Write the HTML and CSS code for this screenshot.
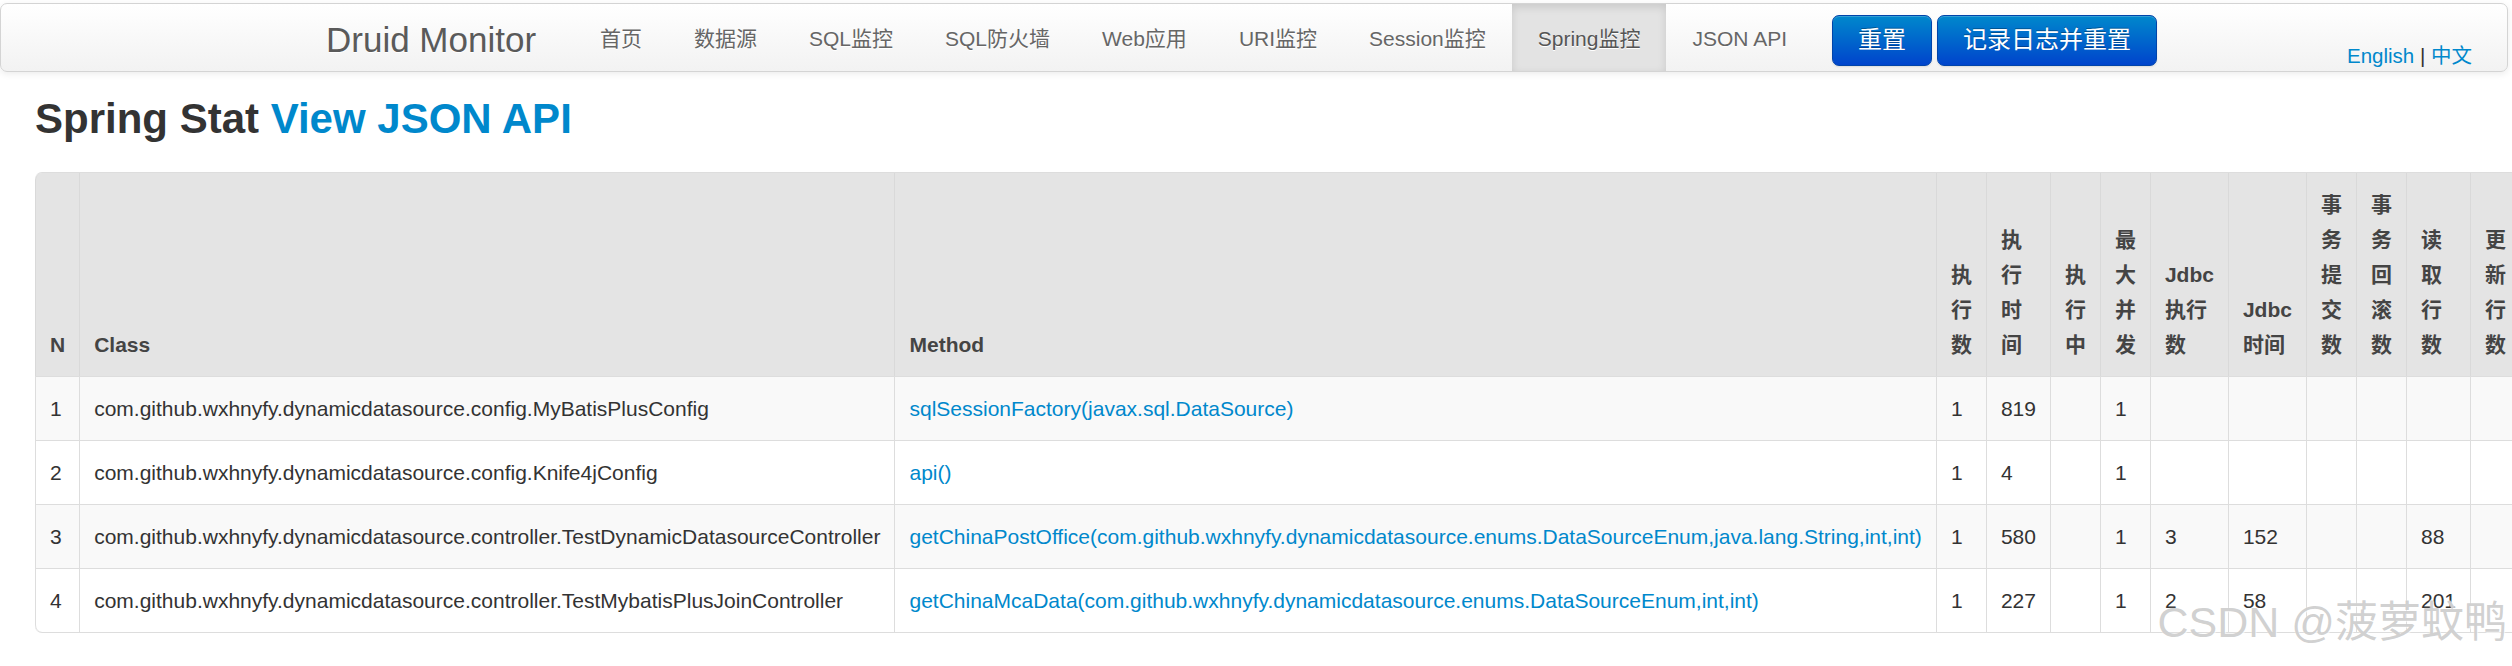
FILE: index.html
```html
<!DOCTYPE html>
<html lang="zh">
<head>
<meta charset="utf-8">
<title>Druid Spring Stat</title>
<link rel="stylesheet" href="styles.css">
</head>
<body>
<div class="page">
  <div class="navbar">
    <div class="navbar-inner">
      <a class="brand" href="#">Druid Monitor</a>
      <ul class="nav">
        <li><a href="#">首页</a></li>
        <li><a href="#">数据源</a></li>
        <li><a href="#">SQL监控</a></li>
        <li><a href="#">SQL防火墙</a></li>
        <li><a href="#">Web应用</a></li>
        <li><a href="#">URI监控</a></li>
        <li><a href="#">Session监控</a></li>
        <li class="active"><a href="#">Spring监控</a></li>
        <li><a href="#">JSON API</a></li>
      </ul>
      <div class="btns">
        <a class="btn btn-primary" href="#">重置</a>
        <a class="btn btn-primary" href="#">记录日志并重置</a>
      </div>
      <div class="lang"><a href="#">English</a> | <a href="#">中文</a></div>
    </div>
  </div>

  <div class="container">
    <h3 class="title">Spring Stat <a href="#">View JSON API</a></h3>
    <table class="table">
      <thead>
        <tr>
          <th>N</th>
          <th>Class</th>
          <th>Method</th>
          <th>执行数</th>
          <th>执行时间</th>
          <th>执行中</th>
          <th>最大并发</th>
          <th>Jdbc执行数</th>
          <th>Jdbc时间</th>
          <th>事务提交数</th>
          <th>事务回滚数</th>
          <th>读取行数</th>
          <th>更新行数</th>
        </tr>
      </thead>
      <tbody>
        <tr>
          <td>1</td>
          <td>com.github.wxhnyfy.dynamicdatasource.config.MyBatisPlusConfig</td>
          <td><a href="#">sqlSessionFactory(javax.sql.DataSource)</a></td>
          <td>1</td><td>819</td><td></td><td>1</td><td></td><td></td><td></td><td></td><td></td><td></td>
        </tr>
        <tr>
          <td>2</td>
          <td>com.github.wxhnyfy.dynamicdatasource.config.Knife4jConfig</td>
          <td><a href="#">api()</a></td>
          <td>1</td><td>4</td><td></td><td>1</td><td></td><td></td><td></td><td></td><td></td><td></td>
        </tr>
        <tr>
          <td>3</td>
          <td>com.github.wxhnyfy.dynamicdatasource.controller.TestDynamicDatasourceController</td>
          <td><a href="#">getChinaPostOffice(com.github.wxhnyfy.dynamicdatasource.enums.DataSourceEnum,java.lang.String,int,int)</a></td>
          <td>1</td><td>580</td><td></td><td>1</td><td>3</td><td>152</td><td></td><td></td><td>88</td><td></td>
        </tr>
        <tr>
          <td>4</td>
          <td>com.github.wxhnyfy.dynamicdatasource.controller.TestMybatisPlusJoinController</td>
          <td><a href="#">getChinaMcaData(com.github.wxhnyfy.dynamicdatasource.enums.DataSourceEnum,int,int)</a></td>
          <td>1</td><td>227</td><td></td><td>1</td><td>2</td><td>58</td><td></td><td></td><td>201</td><td></td>
        </tr>
      </tbody>
    </table>
  </div>
  <div class="watermark">CSDN @菠萝蚊鸭</div>
</div>
</body>
</html>
```

FILE: styles.css
```css
html, body {
  margin: 0;
  padding: 0;
  overflow: hidden;
  background: #fff;
}

body {
  font-family: "Liberation Sans", Arial, "Noto Sans CJK SC", sans-serif;
  font-size: 21px;
  line-height: 35px;
  color: #333;
}

a {
  color: #0088cc;
  text-decoration: none;
}

.page {
  position: relative;
  width: 2512px;
  height: 666px;
}

/* ---------- navbar ---------- */
.navbar {
  padding-top: 3px;
  width: 2508px;
}

.navbar-inner {
  display: flex;
  align-items: stretch;
  height: 67px;
  background: linear-gradient(to bottom, #ffffff, #f2f2f2);
  border: 1px solid #d4d4d4;
  border-radius: 7px;
  box-shadow: 0 2px 7px rgba(0, 0, 0, 0.08);
}

.brand {
  display: block;
  margin-left: 325px;
  width: 248px;
  padding-top: 4px;
  font-size: 35px;
  line-height: 63px;
  color: #5a5a5a;
  text-shadow: 0 1px 0 #fff;
  white-space: nowrap;
}

.nav {
  display: flex;
  margin: 0;
  padding: 0;
  list-style: none;
}

.nav li a {
  display: block;
  height: 67px;
  padding: 2px 26px 0;
  box-sizing: border-box;
  line-height: 65px;
  font-size: 21px;
  color: #666;
  text-shadow: 0 1px 0 #fff;
  white-space: nowrap;
}

.nav li.active a {
  background: #e3e3e3;
  color: #555;
  box-shadow: inset 0 3px 8px rgba(0, 0, 0, 0.12);
}

.btns {
  display: flex;
  gap: 5px;
  margin-left: 19px;
  padding-top: 11px;
}

.btn {
  display: block;
  height: 51px;
  box-sizing: border-box;
  padding: 0 25px;
  font-size: 24px;
  line-height: 48px;
  color: #fff;
  text-shadow: 0 -1px 0 rgba(0, 0, 0, 0.3);
  background: linear-gradient(to bottom, #0088cc, #0044cc);
  border: 1px solid #0044aa;
  border-radius: 7px;
  box-shadow: inset 0 1px 0 rgba(255, 255, 255, 0.2), 0 1px 2px rgba(0, 0, 0, 0.1);
  white-space: nowrap;
}

.lang {
  margin-left: auto;
  margin-right: 35px;
  align-self: flex-end;
  margin-bottom: 4px;
  font-size: 20.5px;
  line-height: 23px;
  color: #333;
  white-space: nowrap;
}

/* ---------- content ---------- */
.container {
  padding: 0 35px;
}

.title {
  margin: 24px 0 31px;
  font-size: 42px;
  line-height: 45px;
  font-weight: bold;
  color: #333;
  white-space: nowrap;
}

.table {
  width: 100%;
  border-collapse: separate;
  border-spacing: 0;
  border: 1px solid #dddddd;
  border-left: 0;
  border-radius: 7px;
}

.table th,
.table td {
  padding: 14px 14px;
  line-height: 35px;
  text-align: left;
  vertical-align: top;
  border-left: 1px solid #dddddd;
  border-top: 1px solid #dddddd;
}

.table thead th {
  border-top: 0;
  vertical-align: bottom;
  background: #e4e4e4;
  border-left-color: #d9d9d9;
  font-weight: bold;
  color: #444;
}

.table thead th:first-child {
  border-top-left-radius: 7px;
}

.table tbody tr:nth-child(odd) td {
  background: #f9f9f9;
}

.table tbody tr:last-child td:first-child {
  border-bottom-left-radius: 7px;
}

/* ---------- watermark ---------- */
.watermark {
  position: absolute;
  right: 5px;
  top: 594px;
  font-size: 43px;
  line-height: 56px;
  color: rgba(170, 170, 170, 0.55);
  text-shadow: 0 0 1px rgba(255, 255, 255, 0.9), 1px 1px 0 rgba(255, 255, 255, 0.6);
  white-space: nowrap;
  pointer-events: none;
}
```
